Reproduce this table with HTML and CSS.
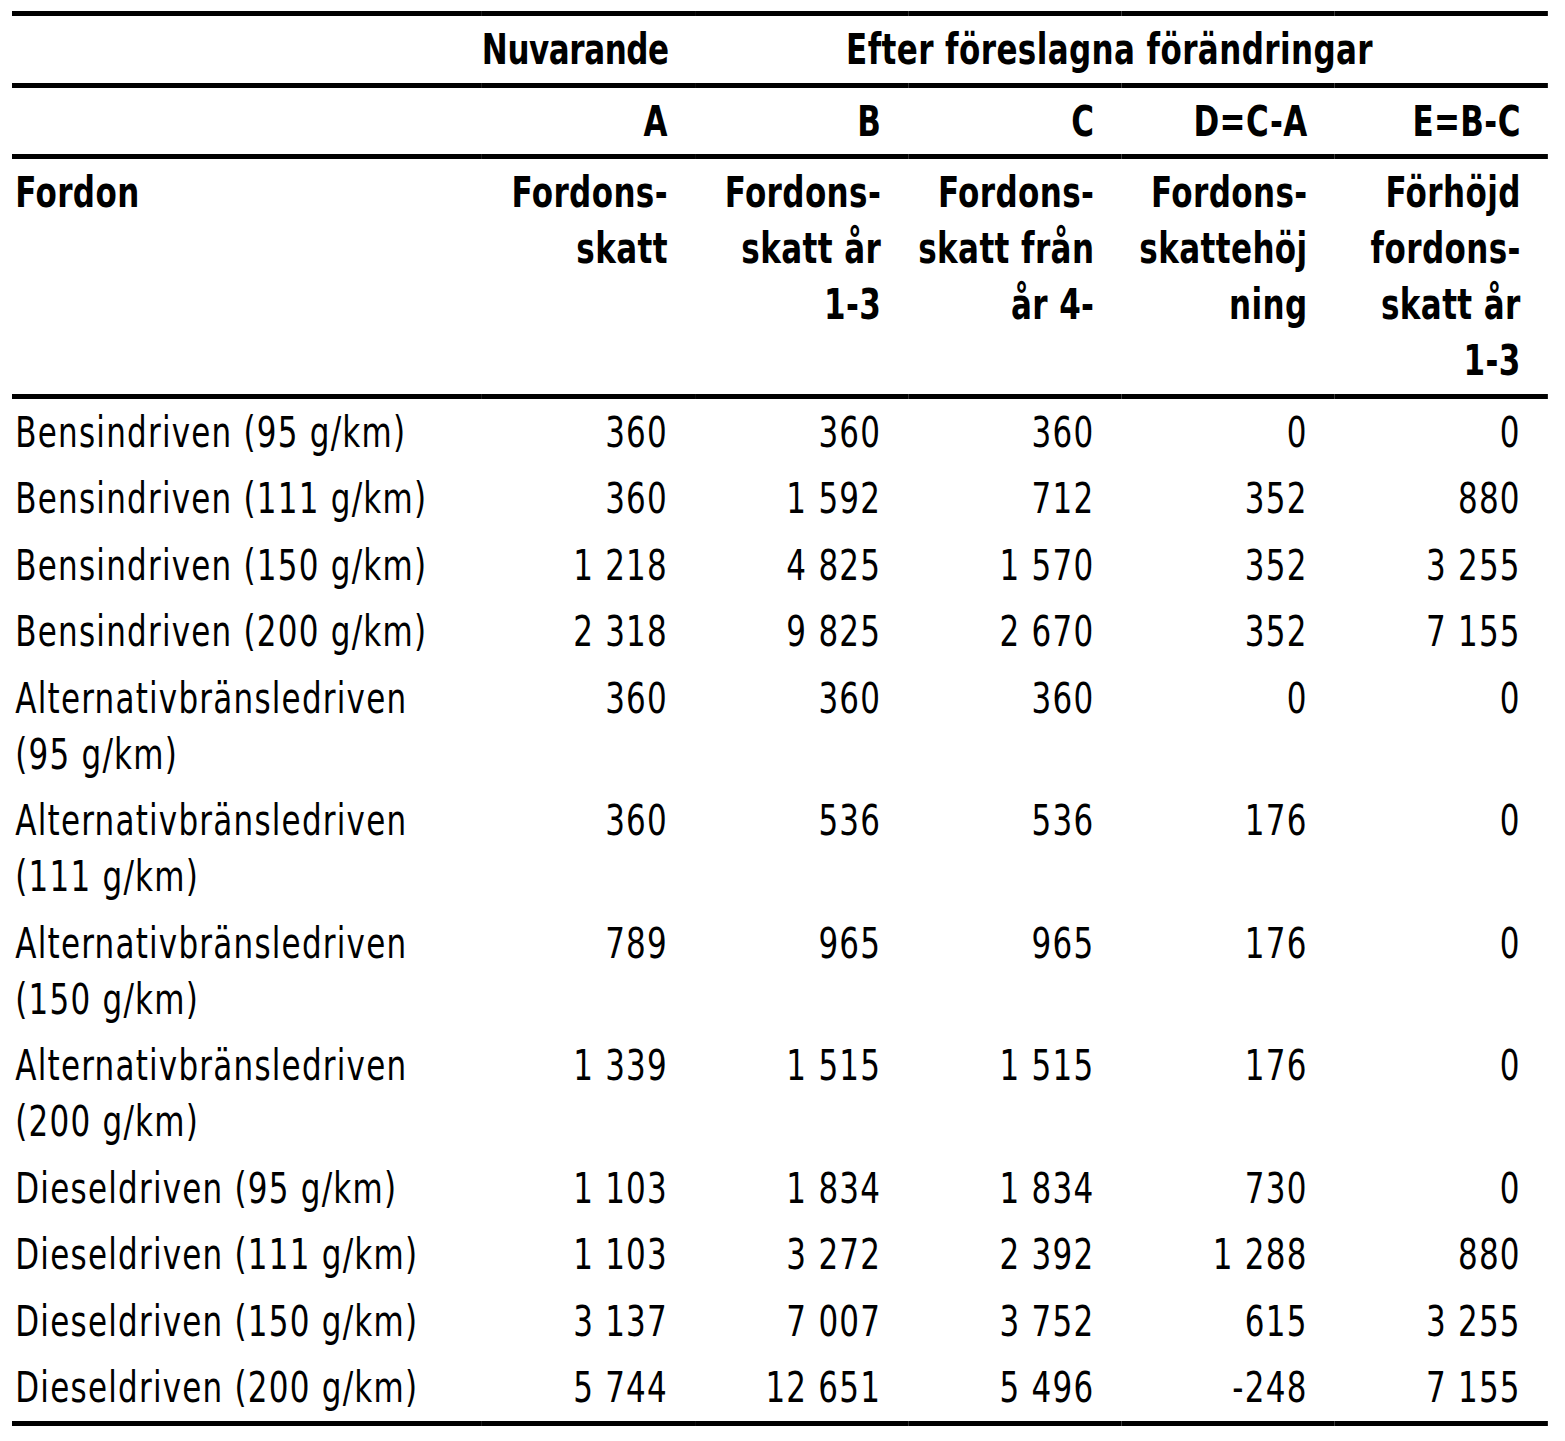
FILE: index.html
```html
<!DOCTYPE html>
<html lang="sv">
<head>
<meta charset="utf-8">
<title>Fordonsskatt</title>
<link rel="stylesheet" href="styles.css">
</head>
<body>
<div class="sheet">
<table class="tax">
  <thead>
    <tr class="h1">
      <th class="first"></th>
      <th class="num tight">Nuvarande</th>
      <th class="group" colspan="4">Efter föreslagna förändringar</th>
    </tr>
    <tr class="h2">
      <th class="first"></th>
      <th class="num">A</th>
      <th class="num">B</th>
      <th class="num">C</th>
      <th class="num">D=C-A</th>
      <th class="num">E=B-C</th>
    </tr>
    <tr class="h3">
      <th class="first">Fordon</th>
      <th class="num">Fordons-<br>skatt</th>
      <th class="num">Fordons-<br>skatt år<br>1-3</th>
      <th class="num">Fordons-<br>skatt från<br>år 4-</th>
      <th class="num">Fordons-<br>skattehöj<br>ning</th>
      <th class="num">Förhöjd<br>fordons-<br>skatt år<br>1-3</th>
    </tr>
  </thead>
  <tbody>
    <tr><td class="first">Bensindriven (95 g/km)</td><td class="num">360</td><td class="num">360</td><td class="num">360</td><td class="num">0</td><td class="num">0</td></tr>
    <tr><td class="first">Bensindriven (111 g/km)</td><td class="num">360</td><td class="num">1 592</td><td class="num">712</td><td class="num">352</td><td class="num">880</td></tr>
    <tr><td class="first">Bensindriven (150 g/km)</td><td class="num">1 218</td><td class="num">4 825</td><td class="num">1 570</td><td class="num">352</td><td class="num">3 255</td></tr>
    <tr><td class="first">Bensindriven (200 g/km)</td><td class="num">2 318</td><td class="num">9 825</td><td class="num">2 670</td><td class="num">352</td><td class="num">7 155</td></tr>
    <tr><td class="first">Alternativbränsledriven<br>(95 g/km)</td><td class="num">360</td><td class="num">360</td><td class="num">360</td><td class="num">0</td><td class="num">0</td></tr>
    <tr><td class="first">Alternativbränsledriven<br>(111 g/km)</td><td class="num">360</td><td class="num">536</td><td class="num">536</td><td class="num">176</td><td class="num">0</td></tr>
    <tr><td class="first">Alternativbränsledriven<br>(150 g/km)</td><td class="num">789</td><td class="num">965</td><td class="num">965</td><td class="num">176</td><td class="num">0</td></tr>
    <tr><td class="first">Alternativbränsledriven<br>(200 g/km)</td><td class="num">1 339</td><td class="num">1 515</td><td class="num">1 515</td><td class="num">176</td><td class="num">0</td></tr>
    <tr><td class="first">Dieseldriven (95 g/km)</td><td class="num">1 103</td><td class="num">1 834</td><td class="num">1 834</td><td class="num">730</td><td class="num">0</td></tr>
    <tr><td class="first">Dieseldriven (111 g/km)</td><td class="num">1 103</td><td class="num">3 272</td><td class="num">2 392</td><td class="num">1 288</td><td class="num">880</td></tr>
    <tr><td class="first">Dieseldriven (150 g/km)</td><td class="num">3 137</td><td class="num">7 007</td><td class="num">3 752</td><td class="num">615</td><td class="num">3 255</td></tr>
    <tr class="last"><td class="first">Dieseldriven (200 g/km)</td><td class="num">5 744</td><td class="num">12 651</td><td class="num">5 496</td><td class="num">-248</td><td class="num">7 155</td></tr>
  </tbody>
</table>
</div>
</body>
</html>
```
FILE: styles.css
```css
html {
  margin: 0;
  padding: 0;
  background: #ffffff;
  overflow: hidden;
}

body {
  margin: 0;
  padding: 11px 0 0 12px;
  color: #000000;
  font-family: "DejaVu Sans Condensed", "DejaVu Sans", "Liberation Sans", sans-serif;
  font-stretch: condensed;
  font-size: 42px;
  line-height: 56px;
}

/* Frame that holds the compressed table at its visual width. */
.sheet {
  width: 1536px;
  overflow: hidden;
}

/* The source typeface is a narrow condensed grotesque; the installed
   condensed face is compressed horizontally to match its proportions. */
.tax {
  border-collapse: collapse;
  table-layout: fixed;
  width: 1873px;
  transform: scaleX(0.82);
  transform-origin: 0 0;
}

.tax th,
.tax td {
  padding: 6px 33px 4.5px 4px;
  vertical-align: top;
  white-space: nowrap;
}

.tax th {
  font-weight: bold;
  letter-spacing: 0.5px;
}

.tax td {
  font-weight: normal;
  letter-spacing: 1.5px;
}

.tax .first {
  width: 536px;
  text-align: left;
}

.tax .num {
  width: 227px;
  padding-left: 0;
  text-align: right;
}

.tax .tight {
  letter-spacing: -0.5px;
}

.tax .group {
  text-align: center;
}

.tax tr.h1 th {
  border-top: 5px solid #000;
  border-bottom: 5px solid #000;
}

.tax tr.h2 th,
.tax tr.h3 th {
  border-bottom: 5px solid #000;
}

.tax tr.last td {
  border-bottom: 5px solid #000;
}
```
